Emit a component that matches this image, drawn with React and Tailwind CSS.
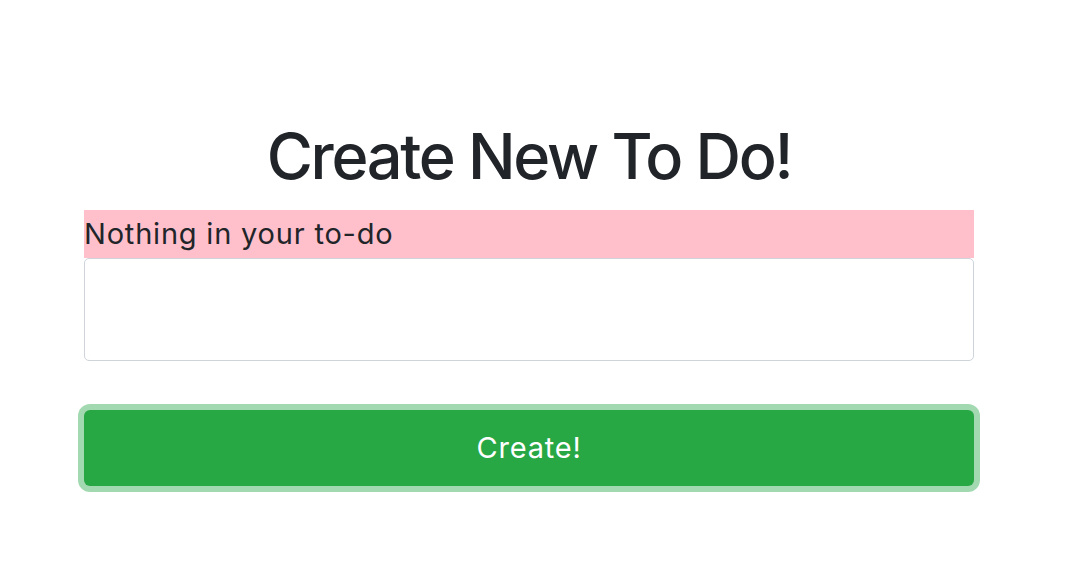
import React, { useState } from 'react';

export default function App() {
  const [todo, setTodo] = useState('');

  return (
    <div className="min-h-[580px] bg-white font-['Inter','Liberation_Sans',sans-serif] text-[#212529]">
      <div className="ml-[84px] w-[890px] pt-[118px]">
        {/* Title */}
        <h1 className="text-center text-[63px] leading-[76px] font-medium tracking-[-2.3px] mb-[16px]">
          Create New To Do!
        </h1>

        {/* Empty state */}
        <div className="bg-[#ffc0cb] h-[48px] text-[29px] leading-[48px] tracking-[0.8px]">
          Nothing in your to-do
        </div>

        {/* Input */}
        <textarea
          value={todo}
          onChange={e => setTodo(e.target.value)}
          className="block w-full h-[103px] border border-[#ced4da] rounded-[5px] bg-white px-3 text-[28px] outline-none resize-none"
        />

        {/* Submit */}
        <button className="mt-[49px] w-full h-[76px] rounded-[6px] bg-[#28a745] text-white text-[29px] tracking-[0.8px] ring-[6px] ring-[#a3d9b1]">
          Create!
        </button>
      </div>
    </div>
  );
}
